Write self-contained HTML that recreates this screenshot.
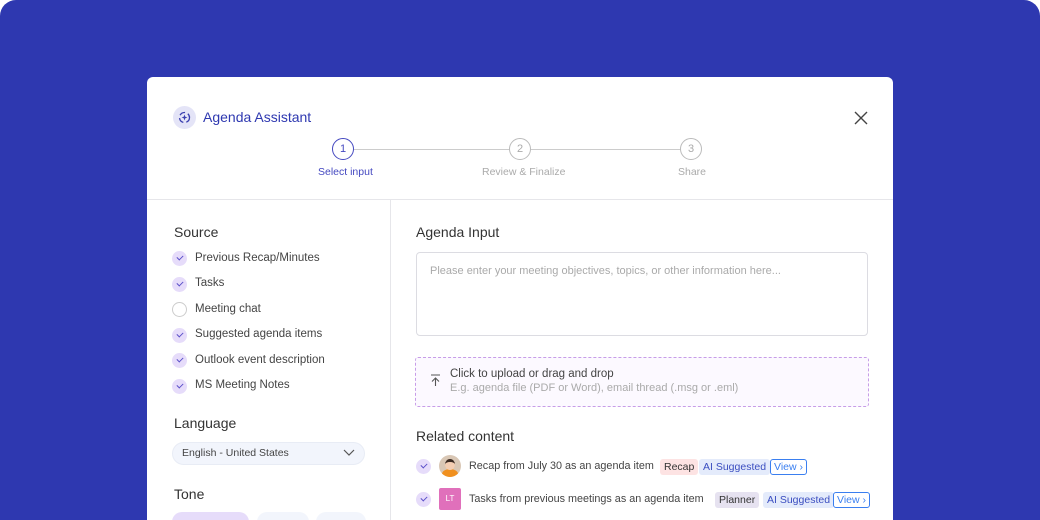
<!DOCTYPE html>
<html><head><style>
*{box-sizing:border-box;margin:0;padding:0}
html,body{width:1040px;height:520px;overflow:hidden;background:#fff}
body{font-family:"Liberation Sans",sans-serif;position:relative}
.bg{position:absolute;inset:0;background:#2e38b0;border-radius:16px 16px 0 0}
.card{position:absolute;left:147px;top:77px;width:746px;height:460px;background:#fff;border-radius:6px}
.abs{position:absolute}
.t{position:absolute;white-space:nowrap}
.chk{position:absolute;width:15px;height:15px;border-radius:50%;background:#e6dcfa}
.chk:after{content:"";position:absolute;left:5px;top:4px;width:5px;height:3px;border-left:1.3px solid #5a4fc8;border-bottom:1.3px solid #5a4fc8;transform:rotate(-45deg)}
.item{font-size:11.5px;color:#444}
.h{font-size:14px;color:#333}
.tag{position:absolute;height:16px;font-size:10.5px;line-height:16px;padding:0 4px;border-radius:3px}
.view{position:absolute;height:16px;font-size:10.5px;line-height:14px;padding:0 3px;border:1.3px solid #3a7ff0;color:#3a7ff0;border-radius:3px}
.step{position:absolute;top:61px;width:22px;height:22px;border-radius:50%;background:#fff;font-size:11px;display:flex;align-items:center;justify-content:center}
</style></head><body>
<div class="bg"></div>
<div class="card">
 <div class="abs" style="left:26px;top:29px;width:23px;height:23px;border-radius:50%;background:#e4e4f7"></div>
 <svg class="abs" style="left:30px;top:33px" width="15" height="15" viewBox="0 0 15 15"><circle cx="7.5" cy="7.5" r="5" fill="none" stroke="#3a3fb0" stroke-width="1.3" stroke-dasharray="6 3"/><path d="M7.5 4.5 L8.3 6.7 L10.5 7.5 L8.3 8.3 L7.5 10.5 L6.7 8.3 L4.5 7.5 L6.7 6.7Z" fill="#3a3fb0"/></svg>
 <div class="t" style="left:56px;top:32px;font-size:14px;color:#2e38b0">Agenda Assistant</div>
 <svg class="abs" style="left:707px;top:34px" width="14" height="14"><path d="M1 1L13 13M13 1L1 13" stroke="#444" stroke-width="1.4"/></svg>
 <div class="abs" style="left:207px;top:72px;width:327px;height:1px;background:#ccc"></div>
 <div class="step" style="left:185px;border:1.5px solid #4448c0;color:#4448c0">1</div>
 <div class="step" style="left:362px;border:1.3px solid #bbb;color:#aaa">2</div>
 <div class="step" style="left:533px;border:1.3px solid #bbb;color:#aaa">3</div>
 <div class="t" style="left:171px;top:89px;font-size:10.5px;color:#4448c0">Select input</div>
 <div class="t" style="left:335px;top:89px;font-size:10.5px;color:#aaa">Review &amp; Finalize</div>
 <div class="t" style="left:531px;top:89px;font-size:10.5px;color:#aaa">Share</div>
 <div class="abs" style="left:0;top:122px;width:746px;height:1px;background:#e6e6ea"></div>
 <div class="abs" style="left:243px;top:122px;width:1px;height:340px;background:#e6e6ea"></div>

 <div class="t h" style="left:27px;top:147px">Source</div>
 <div class="chk" style="left:25px;top:174px"></div><div class="t item" style="left:48px;top:175px">Previous Recap/Minutes</div>
 <div class="chk" style="left:25px;top:200px"></div><div class="t item" style="left:48px;top:200px">Tasks</div>
 <div class="abs" style="left:25px;top:225px;width:15px;height:15px;border-radius:50%;border:1px solid #ccc"></div><div class="t item" style="left:48px;top:226px">Meeting chat</div>
 <div class="chk" style="left:25px;top:251px"></div><div class="t item" style="left:48px;top:251px">Suggested agenda items</div>
 <div class="chk" style="left:25px;top:276px"></div><div class="t item" style="left:48px;top:277px">Outlook event description</div>
 <div class="chk" style="left:25px;top:302px"></div><div class="t item" style="left:48px;top:302px">MS Meeting Notes</div>
 <div class="t h" style="left:27px;top:338px">Language</div>
 <div class="abs" style="left:25px;top:365px;width:193px;height:23px;border-radius:12px;background:#f2f5fc;border:1px solid #e8ecf5"></div>
 <div class="t" style="left:35px;top:370px;font-size:10.5px;color:#444">English - United States</div>
 <svg class="abs" style="left:196px;top:372px" width="12" height="8"><path d="M1 1L6 6L11 1" stroke="#555" fill="none" stroke-width="1.2"/></svg>
 <div class="t h" style="left:27px;top:409px">Tone</div>
 <div class="abs" style="left:25px;top:435px;width:77px;height:20px;border-radius:10px;background:#e6dcfa"></div>
 <div class="abs" style="left:110px;top:435px;width:52px;height:20px;border-radius:10px;background:#f2f5fc"></div>
 <div class="abs" style="left:169px;top:435px;width:50px;height:20px;border-radius:10px;background:#f2f5fc"></div>

 <div class="t h" style="left:269px;top:147px">Agenda Input</div>
 <div class="abs" style="left:269px;top:175px;width:452px;height:84px;border:1px solid #dcdce2;border-radius:4px"></div>
 <div class="t" style="left:283px;top:188px;font-size:11px;color:#aaa">Please enter your meeting objectives, topics, or other information here...</div>
 <div class="abs" style="left:268px;top:280px;width:454px;height:50px;border:1.3px dashed #c79de8;border-radius:3px;background:#fcf9ff"></div>
 <svg class="abs" style="left:283px;top:297px" width="11" height="13"><path d="M1 1H10M5.5 12V4M2 7.5L5.5 4L9 7.5" stroke="#555" fill="none" stroke-width="1.1"/></svg>
 <div class="t" style="left:303px;top:291px;font-size:11.5px;color:#444">Click to upload or drag and drop</div>
 <div class="t" style="left:303px;top:305px;font-size:11px;color:#aaa">E.g. agenda file (PDF or Word), email thread (.msg or .eml)</div>
 <div class="t h" style="left:269px;top:351px">Related content</div>
 <div class="chk" style="left:269px;top:382px"></div>
 <div class="abs" style="left:292px;top:378px;width:22px;height:22px;border-radius:50%;background:#d9c7b5;overflow:hidden"><div style="position:absolute;left:3px;top:14px;width:16px;height:10px;border-radius:50%;background:#f0901f"></div><div style="position:absolute;left:6px;top:4px;width:10px;height:11px;border-radius:50%;background:#f3cdb2;border-top:3px solid #3b2a22"></div></div>
 <div class="t" style="left:322px;top:383px;font-size:10.8px;color:#444">Recap from July 30 as an agenda item</div>
 <div class="tag" style="left:513px;top:382px;background:#fde3e3;color:#333">Recap</div>
 <div class="tag" style="left:552px;top:382px;background:#e4ebfb;color:#3b4ec0">AI Suggested</div>
 <div class="view" style="left:623px;top:382px">View ›</div>
 <div class="chk" style="left:269px;top:415px"></div>
 <div class="abs" style="left:292px;top:411px;width:22px;height:22px;border-radius:2px;background:#e070bb;color:#fff;font-size:8px;text-align:center;line-height:22px">LT</div>
 <div class="t" style="left:322px;top:416px;font-size:10.8px;color:#444">Tasks from previous meetings as an agenda item</div>
 <div class="tag" style="left:568px;top:415px;background:#e6e2f0;color:#333">Planner</div>
 <div class="tag" style="left:616px;top:415px;background:#e4ebfb;color:#3b4ec0">AI Suggested</div>
 <div class="view" style="left:686px;top:415px">View ›</div>
</div>
</body></html>
